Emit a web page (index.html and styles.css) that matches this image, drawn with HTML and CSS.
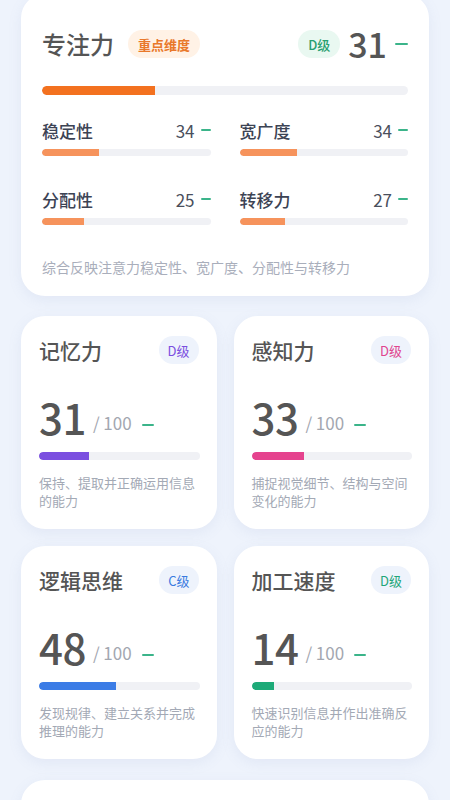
FILE: index.html
```html
<!DOCTYPE html>
<html lang="zh-CN">
<head>
  <meta charset="UTF-8" />
  <title>能力维度</title>
  <link rel="stylesheet" href="styles.css">
</head>
<body>
  <div class="page">

    <div class="card focus">
      <div class="focus-head">
        <div class="focus-title">专注力</div>
        <span class="tag tag-key">重点维度</span>
        <span class="spacer"></span>
        <span class="tag tag-green">D级</span>
        <span class="focus-score">31</span>
        <span class="trend"></span>
      </div>
      <div class="bar bar-main"><div class="fill fill-orange" style="width: 31%"></div></div>

      <div class="subs">
        <div class="sub">
          <div class="sub-row"><span class="sub-name">稳定性</span><span class="sub-score">34</span><span class="trend small"></span></div>
          <div class="bar bar-sub"><div class="fill fill-peach" style="width: 34%"></div></div>
        </div>
        <div class="sub">
          <div class="sub-row"><span class="sub-name">宽广度</span><span class="sub-score">34</span><span class="trend small"></span></div>
          <div class="bar bar-sub"><div class="fill fill-peach" style="width: 34%"></div></div>
        </div>
        <div class="sub">
          <div class="sub-row"><span class="sub-name">分配性</span><span class="sub-score">25</span><span class="trend small"></span></div>
          <div class="bar bar-sub"><div class="fill fill-peach" style="width: 25%"></div></div>
        </div>
        <div class="sub">
          <div class="sub-row"><span class="sub-name">转移力</span><span class="sub-score">27</span><span class="trend small"></span></div>
          <div class="bar bar-sub"><div class="fill fill-peach" style="width: 27%"></div></div>
        </div>
      </div>

      <p class="focus-desc">综合反映注意力稳定性、宽广度、分配性与转移力</p>
    </div>

    <div class="grid">
      <div class="card dim">
        <div class="dim-head">
          <span class="dim-title">记忆力</span>
          <span class="tag tag-soft purple">D级</span>
        </div>
        <div class="dim-score"><span class="big">31</span><span class="max">/ 100</span><span class="trend"></span></div>
        <div class="bar bar-dim"><div class="fill fill-purple" style="width: 31%"></div></div>
        <p class="dim-desc">保持、提取并正确运用信息的能力</p>
      </div>

      <div class="card dim">
        <div class="dim-head">
          <span class="dim-title">感知力</span>
          <span class="tag tag-soft pink">D级</span>
        </div>
        <div class="dim-score"><span class="big">33</span><span class="max">/ 100</span><span class="trend"></span></div>
        <div class="bar bar-dim"><div class="fill fill-pink" style="width: 33%"></div></div>
        <p class="dim-desc">捕捉视觉细节、结构与空间变化的能力</p>
      </div>

      <div class="card dim">
        <div class="dim-head">
          <span class="dim-title">逻辑思维</span>
          <span class="tag tag-soft blue">C级</span>
        </div>
        <div class="dim-score"><span class="big">48</span><span class="max">/ 100</span><span class="trend"></span></div>
        <div class="bar bar-dim"><div class="fill fill-blue" style="width: 48%"></div></div>
        <p class="dim-desc">发现规律、建立关系并完成推理的能力</p>
      </div>

      <div class="card dim">
        <div class="dim-head">
          <span class="dim-title">加工速度</span>
          <span class="tag tag-soft green">D级</span>
        </div>
        <div class="dim-score"><span class="big">14</span><span class="max">/ 100</span><span class="trend"></span></div>
        <div class="bar bar-dim"><div class="fill fill-green" style="width: 14%"></div></div>
        <p class="dim-desc">快速识别信息并作出准确反应的能力</p>
      </div>
    </div>

    <div class="card next"></div>
  </div>
</body>
</html>
```

FILE: styles.css
```css
* {
  margin: 0;
  padding: 0;
  box-sizing: border-box;
  font-family: "Noto Sans CJK SC", "Noto Sans", sans-serif;
}

body {
  background: #eef3fc;
  overflow: hidden;
}

.page {
  padding: 0 21px;
  margin-top: -6px;
}

.card {
  background: #fff;
  border-radius: 24px;
  box-shadow: 0 4px 14px rgba(120, 140, 190, 0.10);
}

/* focus card */
.focus {
  padding: 30px 21px 19px;
}

.focus-head {
  display: flex;
  align-items: center;
  height: 40px;
}

.focus-title {
  font-size: 24px;
  font-weight: 500;
  color: #555;
  line-height: 32px;
}

.tag {
  display: inline-flex;
  align-items: center;
  justify-content: center;
  height: 28px;
  padding: 0 10px;
  border-radius: 14px;
  font-size: 13px;
  font-weight: 500;
}

.tag-key {
  margin-left: 14px;
  background: #fff2e6;
  color: #e9782a;
  font-weight: 700;
}

.tag-green {
  background: #e9f8f1;
  color: #2a9f70;
}

.spacer { flex: 1; }

.focus-score {
  margin-left: 8px;
  font-size: 34px;
  font-weight: 500;
  color: #555;
  line-height: 40px;
}

/* green "no change" dash */
.trend {
  display: inline-block;
  width: 13px;
  height: 2px;
  margin-left: 8px;
  background: #3bb48a;
  border-radius: 1px;
}

.trend.small {
  width: 10px;
  margin-left: 6px;
}

.bar {
  background: #f0f1f5;
  border-radius: 5px;
  overflow: hidden;
}

.fill {
  height: 100%;
  border-radius: 5px 0 0 5px;
}

.bar-main {
  height: 9px;
  margin-top: 22px;
}

.fill-orange { background: #f3711f; }
.fill-peach { background: #f6935c; }
.fill-purple { background: #7b4fe0; }
.fill-pink { background: #e5438e; }
.fill-blue { background: #3b7ce6; }
.fill-green { background: #1daa78; }

.subs {
  display: grid;
  grid-template-columns: 1fr 1fr;
  column-gap: 29px;
  row-gap: 31px;
  margin-top: 23px;
}

.sub-row {
  display: flex;
  align-items: center;
  height: 24px;
}

.sub-name {
  flex: 1;
  font-size: 17px;
  font-weight: 500;
  color: #3c4354;
}

.sub-score {
  font-size: 17px;
  color: #4a4f5c;
}

.bar-sub {
  height: 7px;
  margin-top: 7px;
}

.focus-desc {
  margin-top: 32px;
  font-size: 14px;
  line-height: 20px;
  color: #a9aebb;
}

/* dimension cards */
.grid {
  display: grid;
  grid-template-columns: 1fr 1fr;
  gap: 17px;
  margin-top: 20px;
}

.dim {
  padding: 19px 17px 19px 18px;
}

.dim-head {
  display: flex;
  align-items: center;
  justify-content: space-between;
  height: 30px;
}

.dim-title {
  font-size: 21px;
  font-weight: 500;
  color: #555;
}

.tag-soft {
  background: #eef3fc;
  height: 28px;
  padding: 0 9px;
  margin-right: 1px;
  font-weight: 400;
}

.purple { color: #7b4fe0; }
.pink { color: #e0458f; }
.blue { color: #3a7be0; }
.green { color: #1fa67a; }

.dim-score {
  margin-top: 29px;
  height: 46px;
  line-height: 46px;
  white-space: nowrap;
}

.big {
  font-size: 42px;
  font-weight: 500;
  color: #555;
  letter-spacing: -0.5px;
}

.max {
  margin-left: 7px;
  font-size: 17px;
  color: #a3a7b0;
  vertical-align: 5px;
}

.dim-score .trend {
  width: 12px;
  margin-left: 10px;
  vertical-align: 9px;
}

.bar-dim {
  height: 8px;
  margin-top: 12px;
}

.dim-desc {
  margin-top: 14px;
  font-size: 13px;
  line-height: 18px;
  color: #a3a9b5;
}

.next {
  height: 120px;
  margin-top: 21px;
}
```
